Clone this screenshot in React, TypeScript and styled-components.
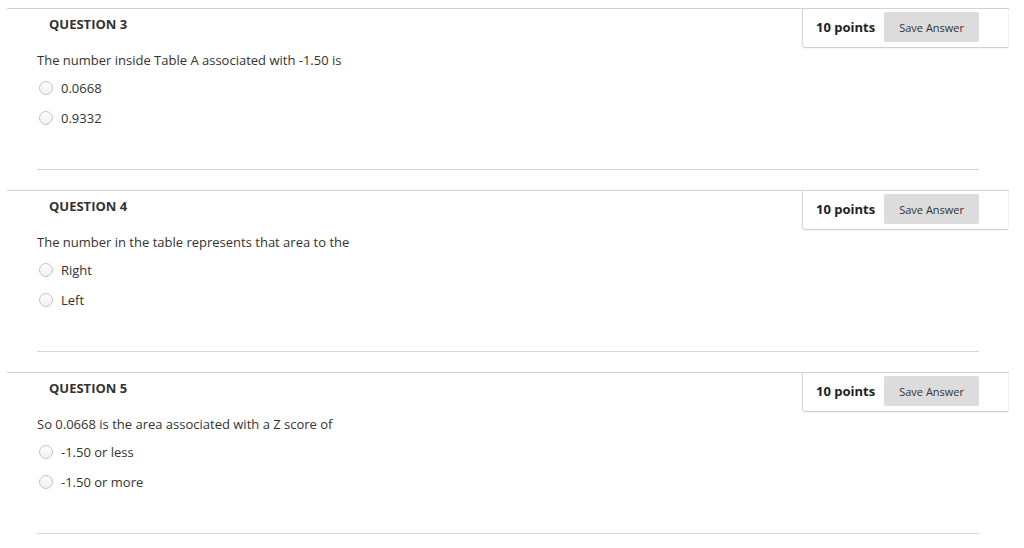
import React from "react";
import styled, { createGlobalStyle } from "styled-components";

const Global = createGlobalStyle`
  html, body { margin: 0; padding: 0; background: #fff; }
  body { font-family: "Open Sans", "Liberation Sans", Arial, sans-serif; color: #333; }
`;

const Page = styled.div`
  width: 1002px;
  padding-left: 7px;
  padding-top: 8px;
`;

const Section = styled.section`
  border-top: 1px solid #d2d2d2;
`;

const HeaderRow = styled.div`
  display: flex;
  align-items: flex-start;
  height: 39px;
`;

const Title = styled.h3`
  margin: 0;
  padding-left: 42px;
  height: 30px;
  line-height: 30px;
  font-size: 13px;
  font-weight: 700;
  color: #333;
`;

const PointsBox = styled.div`
  margin-left: auto;
  width: 207px;
  height: 39px;
  box-sizing: border-box;
  display: flex;
  align-items: flex-start;
  gap: 9px;
  padding-left: 13px;
  padding-top: 3px;
  border-left: 1px solid #d8d8d8;
  border-bottom: 1px solid #cfcfcf;
  border-right: 1px solid #f2f2f2;
  border-bottom-left-radius: 4px;
  box-shadow: -1px 1px 1px rgba(0, 0, 0, 0.04);
`;

const Points = styled.span`
  font-size: 13px;
  line-height: 30px;
  font-weight: 700;
  color: #222;
  white-space: nowrap;
`;

const SaveButton = styled.button`
  width: 95px;
  height: 30px;
  border: none;
  border-radius: 2px;
  background: #dcdcdc;
  color: #333;
  font-family: "Open Sans", "Liberation Sans", Arial, sans-serif;
  font-size: 11px;
  padding: 0;
`;

const Body = styled.div`
  padding-left: 30px;
  width: 942px;
`;

const Prompt = styled.p`
  margin: 3px 0 4px;
  line-height: 18px;
  font-size: 13px;
  color: #333;
`;

const Option = styled.label`
  display: flex;
  align-items: center;
  height: 30px;
  font-size: 13px;
  color: #333;
`;

const Radio = styled.span`
  width: 14px;
  height: 14px;
  box-sizing: border-box;
  border-radius: 50%;
  border: 1px solid #c4c4c4;
  background: linear-gradient(#fdfdfd, #f1f1f1);
  margin-left: 2px;
  margin-right: 8px;
  flex: none;
`;

const Divider = styled.hr`
  border: none;
  border-top: 1px solid #d6d6d6;
  margin: 36px 0 20px;
`;

const questions = [
  {
    n: 3,
    prompt: "The number inside Table A associated with -1.50 is",
    options: ["0.0668", "0.9332"],
  },
  {
    n: 4,
    prompt: "The number in the table represents that area to the",
    options: ["Right", "Left"],
  },
  {
    n: 5,
    prompt: "So 0.0668 is the area associated with a Z score of",
    options: ["-1.50 or less", "-1.50 or more"],
  },
];

export default function App() {
  return (
    <Page>
      <Global />
      {questions.map((q) => (
        <Section key={q.n}>
          <HeaderRow>
            <Title>QUESTION {q.n}</Title>
            <PointsBox>
              <Points>10 points</Points>
              <SaveButton>Save Answer</SaveButton>
            </PointsBox>
          </HeaderRow>
          <Body>
            <Prompt>{q.prompt}</Prompt>
            {q.options.map((o) => (
              <Option key={o}>
                <Radio />
                {o}
              </Option>
            ))}
            <Divider />
          </Body>
        </Section>
      ))}
    </Page>
  );
}
